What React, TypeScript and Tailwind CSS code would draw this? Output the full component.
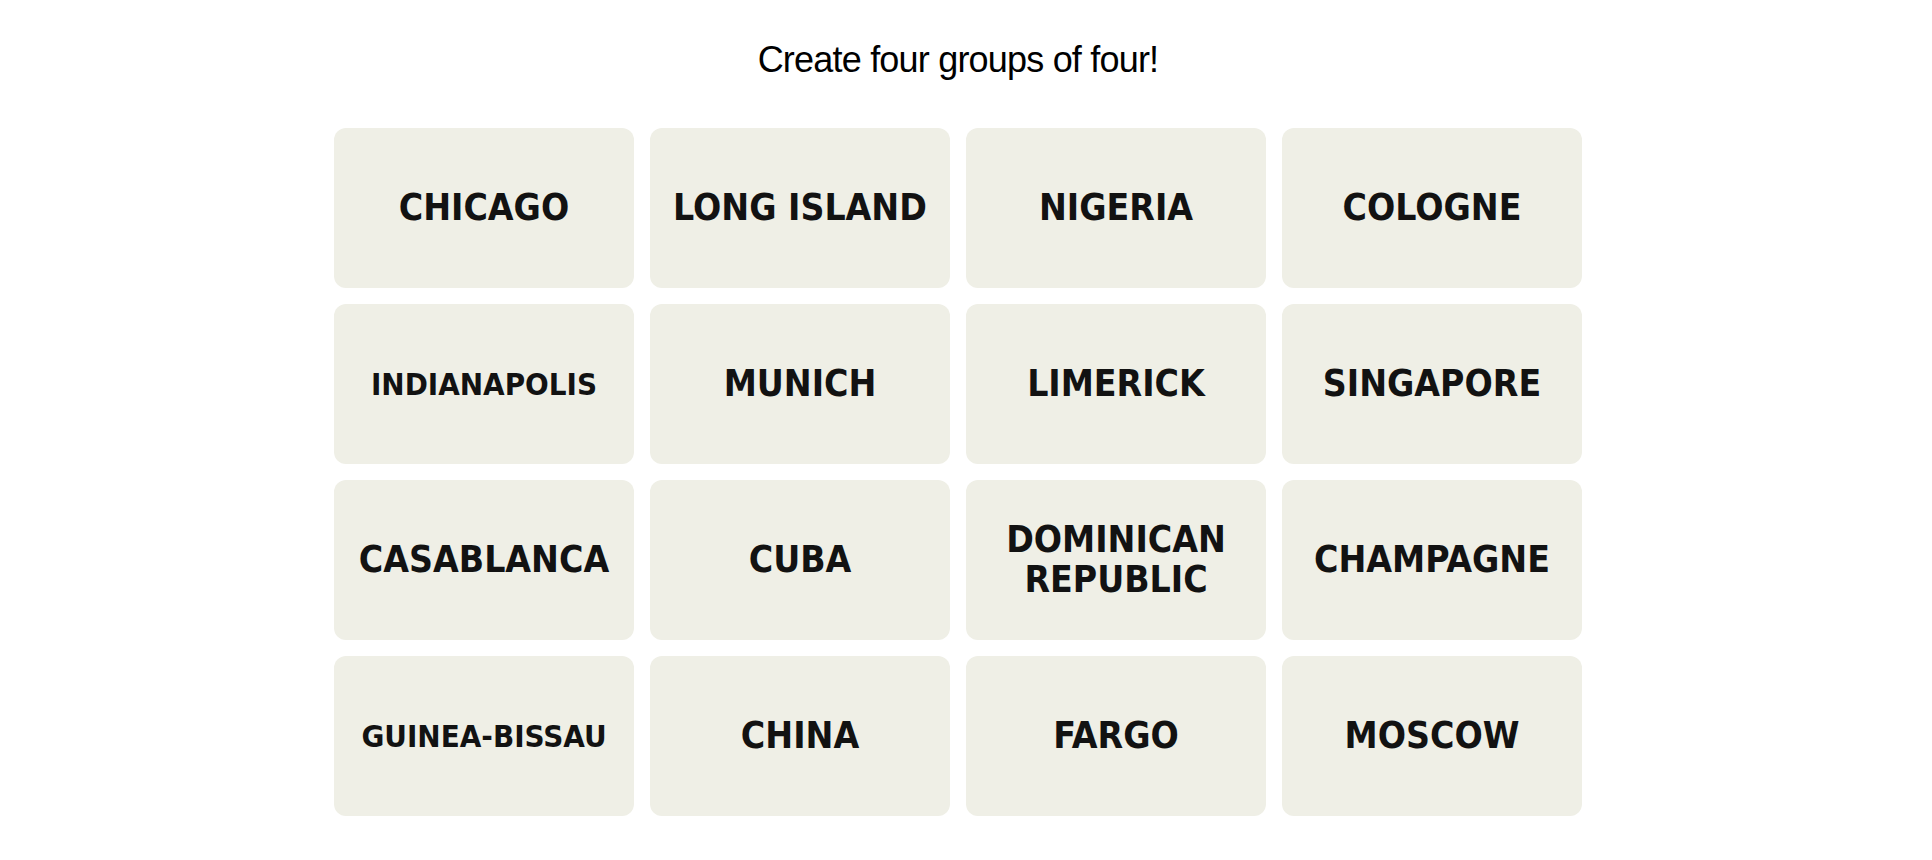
const words: { label: string; small?: boolean }[] = [
  { label: 'CHICAGO' },
  { label: 'LONG ISLAND' },
  { label: 'NIGERIA' },
  { label: 'COLOGNE' },
  { label: 'INDIANAPOLIS', small: true },
  { label: 'MUNICH' },
  { label: 'LIMERICK' },
  { label: 'SINGAPORE' },
  { label: 'CASABLANCA' },
  { label: 'CUBA' },
  { label: 'DOMINICAN REPUBLIC' },
  { label: 'CHAMPAGNE' },
  { label: 'GUINEA-BISSAU', small: true },
  { label: 'CHINA' },
  { label: 'FARGO' },
  { label: 'MOSCOW' },
];

function Tile({ label, small }: { label: string; small?: boolean }) {
  return (
    <button
      type="button"
      className="flex h-[160px] items-center justify-center rounded-xl bg-[#efefe6] px-4 text-center"
    >
      <span
        className={
          small
            ? "whitespace-nowrap font-['DejaVu_Sans_Condensed','Liberation_Sans',sans-serif] text-[31px] font-bold leading-[40px] text-[#121212] font-stretch-condensed"
            : "font-['DejaVu_Sans_Condensed','Liberation_Sans',sans-serif] text-[37px] font-bold leading-[40px] text-[#121212] font-stretch-condensed"
        }
      >
        {label === 'DOMINICAN REPUBLIC' ? (
          <>
            DOMINICAN
            <br />
            REPUBLIC
          </>
        ) : (
          label
        )}
      </span>
    </button>
  );
}

export default function App() {
  return (
    <div className="flex min-h-[860px] w-full flex-col items-center bg-white pr-4 font-['Liberation_Sans',Arial,sans-serif]">
      <p className="pt-[40px] text-[36px] leading-[40px] tracking-[-0.8px] text-black">
        Create four groups of four!
      </p>
      <div className="mt-[48px] grid w-[1248px] grid-cols-4 gap-4">
        {words.map((w) => (
          <Tile key={w.label} label={w.label} small={w.small} />
        ))}
      </div>
    </div>
  );
}
